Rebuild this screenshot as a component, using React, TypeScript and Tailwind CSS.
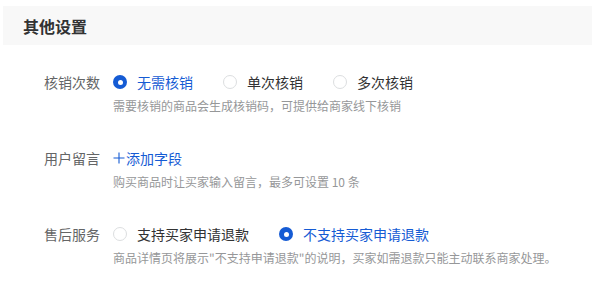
import React, { useState } from 'react';

type Option = { value: string; label: string };

const Radio: React.FC<{ checked: boolean; label: string; onClick: () => void }> = ({ checked, label, onClick }) => (
  <label onClick={onClick} className="flex items-center gap-[10px] cursor-pointer mr-[30px]">
    {checked ? (
      <span className="w-[14px] h-[14px] rounded-full bg-[#155bd4] flex items-center justify-center">
        <span className="w-[5px] h-[5px] rounded-full bg-white" />
      </span>
    ) : (
      <span className="w-[14px] h-[14px] rounded-full border border-[#dcdee0] bg-white" />
    )}
    <span className={checked ? 'text-[#155bd4]' : 'text-[#323233]'}>{label}</span>
  </label>
);

const RadioGroup: React.FC<{ options: Option[]; value: string; onChange: (v: string) => void }> = ({
  options,
  value,
  onChange,
}) => (
  <div className="flex items-center h-5">
    {options.map((o) => (
      <Radio key={o.value} checked={o.value === value} label={o.label} onClick={() => onChange(o.value)} />
    ))}
  </div>
);

const FormRow: React.FC<{ label: string; help: string; children: React.ReactNode }> = ({ label, help, children }) => (
  <div className="flex">
    <div className="w-[100px] text-right h-5 leading-5 text-[#646566]">{label}</div>
    <div className="ml-[13px] flex flex-col">
      {children}
      <div className="mt-[5px] text-[12px] leading-[18px] text-[#969799]">{help}</div>
    </div>
  </div>
);

const App: React.FC = () => {
  const [verify, setVerify] = useState('none');
  const [refund, setRefund] = useState('no');

  return (
    <div
      className="w-[592px] h-[283px] bg-white text-[14px] leading-5 overflow-hidden"
      style={{ fontFamily: '"Noto Sans CJK SC", "Noto Sans", sans-serif' }}
    >
      <div className="ml-[3px] mt-[6px] h-[39px] bg-[#f8f8f8] pl-5 flex items-center">
        <h2 className="text-[16px] font-bold text-[#323233]">其他设置</h2>
      </div>

      <div className="mt-[27px] flex flex-col gap-[33px]">
        <FormRow label="核销次数" help="需要核销的商品会生成核销码，可提供给商家线下核销">
          <RadioGroup
            value={verify}
            onChange={setVerify}
            options={[
              { value: 'none', label: '无需核销' },
              { value: 'single', label: '单次核销' },
              { value: 'multi', label: '多次核销' },
            ]}
          />
        </FormRow>

        <FormRow label="用户留言" help="购买商品时让买家输入留言，最多可设置 10 条">
          <button className="flex items-center h-5 text-[#155bd4]">
            <svg width="12" height="12" viewBox="0 0 12 12" className="mr-[1px]">
              <path d="M6 0.5v11M0.5 6h11" stroke="currentColor" strokeWidth="1.1" fill="none" />
            </svg>
            <span>添加字段</span>
          </button>
        </FormRow>

        <FormRow label="售后服务" help={'商品详情页将展示"不支持申请退款"的说明，买家如需退款只能主动联系商家处理。'}>
          <RadioGroup
            value={refund}
            onChange={setRefund}
            options={[
              { value: 'yes', label: '支持买家申请退款' },
              { value: 'no', label: '不支持买家申请退款' },
            ]}
          />
        </FormRow>
      </div>
    </div>
  );
};

export default App;
